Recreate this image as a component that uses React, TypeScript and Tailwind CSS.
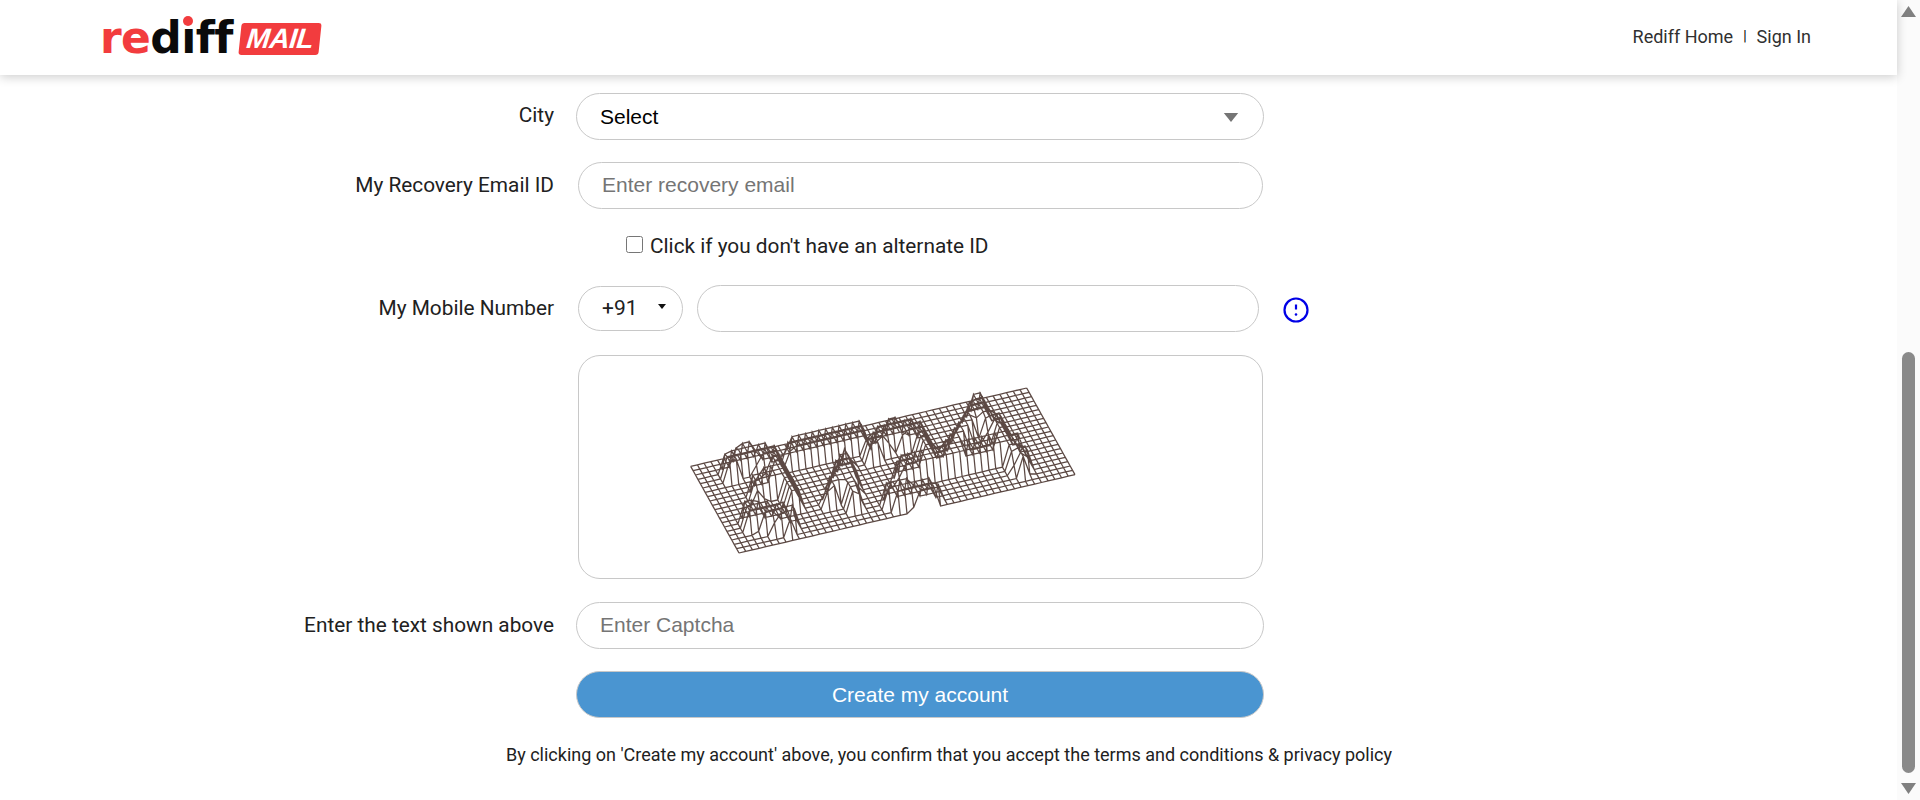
import { useMemo } from "react";

const roboto = "font-['Roboto',sans-serif]";
const arial = "font-['Liberation_Sans',Arial,sans-serif]";

// ridge lines of the captcha, in picture coordinates of the viewBox
const ridges: number[][] = [
  [210, 265, 260, 232],
  [260, 232, 330, 240],
  [330, 240, 405, 350],
  [290, 325, 360, 300],
  [270, 405, 390, 420],
  [400, 215, 600, 175],
  [520, 340, 560, 250],
  [560, 250, 585, 350],
  [640, 205, 700, 160],
  [700, 160, 770, 170],
  [770, 170, 840, 250],
  [700, 345, 820, 345],
  [730, 270, 830, 250],
  [850, 250, 960, 85],
  [960, 85, 1090, 250],
  [880, 240, 1060, 200],
];

const LIFT = 62;
const COLS = 50;
const ROWS = 20;

function segDist(px: number, py: number, s: number[]) {
  const dx = s[2] - s[0];
  const dy = s[3] - s[1];
  const t = Math.max(0, Math.min(1, ((px - s[0]) * dx + (py - s[1]) * dy) / (dx * dx + dy * dy)));
  return Math.hypot(px - s[0] - t * dx, py - s[1] - t * dy);
}

function meshPath() {
  const point = (i: number, j: number) => {
    const u = i / COLS;
    const v = j / ROWS;
    const x = 95 + 1008 * u + 145 * v;
    const y = 292 - 235 * u + 260 * v;
    let d = 999;
    for (const s of ridges) {
      d = Math.min(d, segDist(x, y - LIFT, s));
    }
    const h = Math.max(0, Math.min(1, (24 - d) / 5));
    return `${x.toFixed(1)} ${(y - h * LIFT).toFixed(1)}`;
  };
  let out = "";
  for (let j = 0; j <= ROWS; j++) {
    for (let i = 0; i <= COLS; i++) out += `${i ? "L" : "M"}${point(i, j)}`;
  }
  for (let i = 0; i <= COLS; i++) {
    for (let j = 0; j <= ROWS; j++) out += `${j ? "L" : "M"}${point(i, j)}`;
  }
  return out;
}

function Captcha() {
  const d = useMemo(meshPath, []);
  return (
    <svg viewBox="0 0 1320 600" className="w-[440px] h-[200px] mr-[83px] mt-[4px]">
      <path d={d} fill="none" stroke="#4a3530" strokeWidth="3.8" strokeOpacity="0.9" />
    </svg>
  );
}

function Logo() {
  return (
    <div className="flex items-center">
      <div className="relative flex text-[44px] leading-[46px] font-bold font-['DejaVu_Sans',sans-serif] tracking-[-0.6px] h-[46px]">
        <span className="text-[#f23c3e]">re</span>
        <span className="text-[#0a0a0a]">dıff</span>
        <span className="absolute left-[83px] top-[1px] w-[10px] h-[10px] rounded-full bg-[#f23c3e]" />
      </div>
      <div className="ml-[7px] mt-[3px] w-[80px] h-[32px] rounded-[3px] bg-[#f23c3e] -skew-x-6 flex items-center justify-center">
        <span className={`${arial} text-white text-[28px] font-bold italic leading-none tracking-[-0.5px]`}>MAIL</span>
      </div>
    </div>
  );
}

function Label({ children }: { children: string }) {
  return <label className={`${roboto} w-[554px] shrink-0 text-right text-[20.8px] text-[#212121]`}>{children}</label>;
}

const field =
  "h-[47px] rounded-[24px] border border-[#c8c8c8] bg-white outline-none text-[21px] placeholder:text-[#757575]";

export default function App() {
  return (
    <div className="flex h-screen overflow-hidden bg-white">
      <div className="w-[1897px] flex flex-col">
        <header className="h-[75px] shrink-0 flex items-center justify-between pl-[100px] pr-[86px] bg-white shadow-[0_2px_10px_rgba(0,0,0,0.2)] relative">
          <Logo />
          <nav className={`${roboto} flex items-center text-[18px] text-[#303030] -mt-[2px]`}>
            <span>Rediff Home</span>
            <span className="mx-[10px] text-[14px] text-black">|</span>
            <span>Sign In</span>
          </nav>
        </header>

        <main className="flex flex-col pt-[18px]">
          <div className="flex items-center h-[46px]">
            <Label>City</Label>
            <div className={`${field} relative ml-[22px] w-[688px] h-[46px] flex items-center pl-[23px] pt-[1px]`}>
              <span className={`${arial} text-black`}>Select</span>
              <svg viewBox="0 0 16 10" className="absolute right-[24px] top-[19px] w-[16px] h-[9px]">
                <path d="M0 0h16L8 10z" fill="#757575" />
              </svg>
            </div>
          </div>

          <div className="flex items-center mt-[23px]">
            <Label>My Recovery Email ID</Label>
            <input
              placeholder="Enter recovery email"
              className={`${field} ${arial} ml-[24px] w-[685px] pl-[23px] pb-[2px]`}
            />
          </div>

          <div className={`${roboto} flex items-center mt-[28px] ml-[626px] h-[20px] text-[20.8px] text-[#212121]`}>
            <input type="checkbox" className="w-[17px] h-[17px] m-0 -mt-[5px]" />
            <span className="ml-[7px]">Click if you don't have an alternate ID</span>
          </div>

          <div className="flex items-center mt-[28px]">
            <Label>My Mobile Number</Label>
            <div className={`${roboto} ml-[24px] w-[105px] h-[45px] rounded-[24px] border border-[#c8c8c8] relative flex items-center pl-[23px] text-[21px] text-[#212121]`}>
              +91
              <svg viewBox="0 0 8 5" className="absolute right-[16px] top-[17px] w-[8px] h-[5px]">
                <path d="M0 0h8L4 5z" fill="#111" />
              </svg>
            </div>
            <input className={`${field} ml-[14px] w-[562px]`} />
            <svg viewBox="0 0 26 26" className="ml-[24px] w-[26px] h-[26px] mt-[3px]">
              <circle cx="13" cy="13" r="11.5" fill="none" stroke="#0000e6" strokeWidth="2.2" />
              <path d="M13 7.5v5" stroke="#0000e6" strokeWidth="2.2" />
              <circle cx="13" cy="17.5" r="1.3" fill="#0000e6" />
            </svg>
          </div>

          <div className="ml-[578px] mt-[23px] w-[685px] h-[224px] rounded-[22px] border border-[#c8c8c8] flex items-center justify-center">
            <Captcha />
          </div>

          <div className="flex items-center mt-[23px]">
            <Label>Enter the text shown above</Label>
            <input placeholder="Enter Captcha" className={`${field} ${arial} ml-[22px] w-[688px] pl-[23px] pb-[2px]`} />
          </div>

          <button className={`${arial} ml-[576px] mt-[22px] w-[688px] h-[47px] rounded-[24px] border border-[#c8c8c8] bg-[#4a95d1] text-white text-[21px]`}>
            Create my account
          </button>

          <p className={`${roboto} mt-[26px] ml-[506px] text-[18px] text-[#212121] leading-[22px]`}>
            By clicking on 'Create my account' above, you confirm that you accept the terms and conditions &amp; privacy policy
          </p>
        </main>
      </div>

      <aside className="w-[23px] shrink-0 bg-[#fbfbfb] flex flex-col items-center">
        <svg viewBox="0 0 15 11" className="mt-[6px] w-[15px] h-[11px]">
          <path d="M7.5 0L15 11H0z" fill="#808080" />
        </svg>
        <div className="mt-[335px] w-[13px] h-[421px] rounded-[7px] bg-[#8a8a8a]" />
        <svg viewBox="0 0 15 11" className="mt-[10px] w-[15px] h-[11px]">
          <path d="M0 0H15L7.5 11z" fill="#808080" />
        </svg>
      </aside>
    </div>
  );
}
